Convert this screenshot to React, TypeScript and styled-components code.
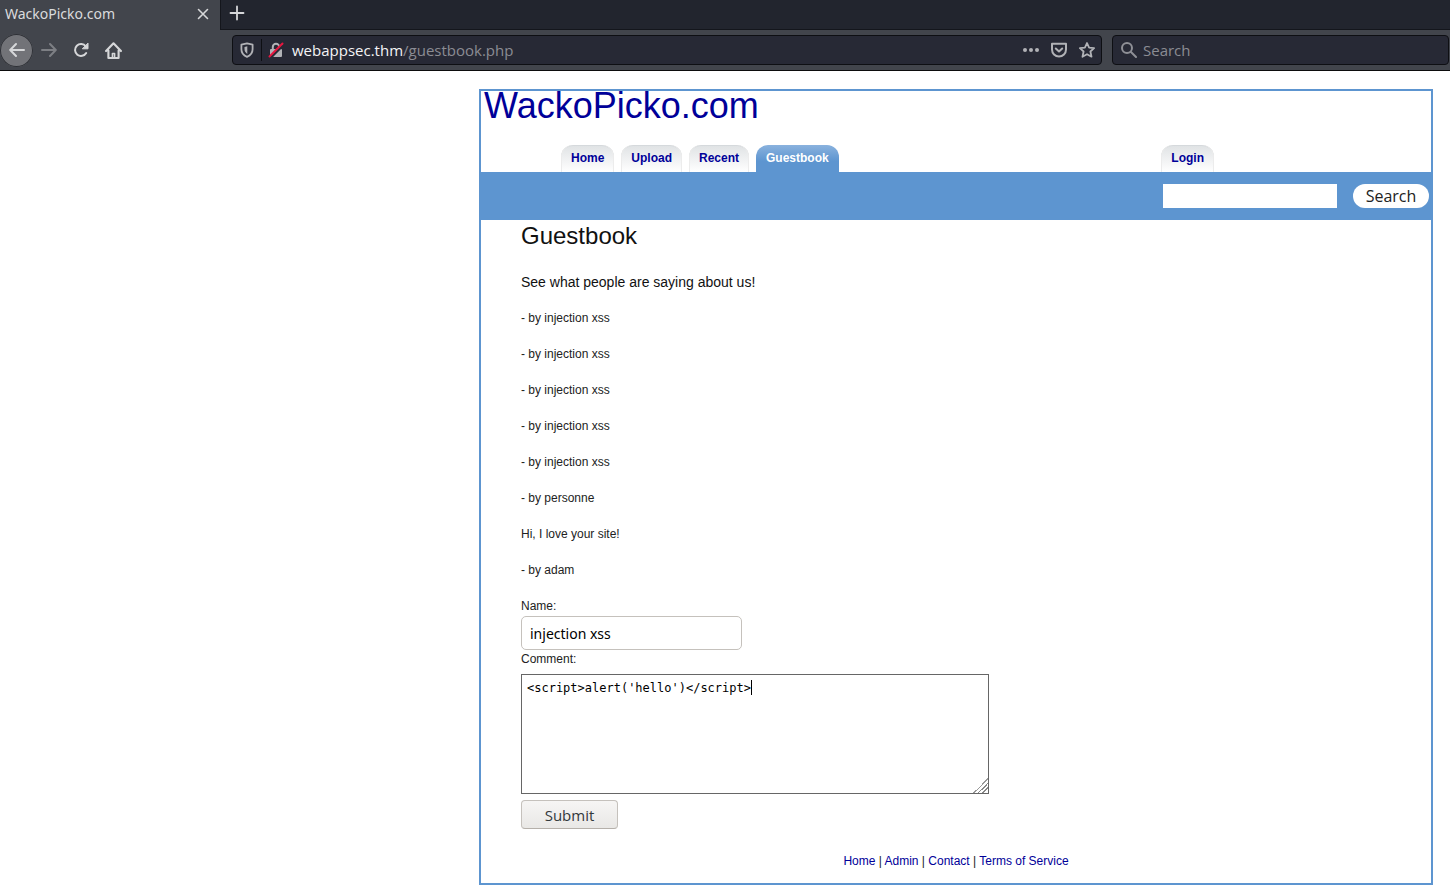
import React from "react";
import styled, { createGlobalStyle, css } from "styled-components";

const uiFont = `"Open Sans", "Noto Sans", sans-serif`;
const tabFont = `"Noto Sans", "Open Sans", sans-serif`;
const siteFont = `"Liberation Sans", Arial, sans-serif`;
const blue = "#5d95d0";
const navy = "#000099";

const GlobalStyle = createGlobalStyle`
  * { box-sizing: border-box; }
  body { margin: 0; background: #fff; color: #222; font: 12px/18px ${siteFont}; }
  h1, h2, p, ul { margin: 0; padding: 0; font-weight: normal; }
  button, input, textarea { margin: 0; }
  a { color: ${navy}; text-decoration: none; }
`;

const Chrome = styled.header`
  font-family: ${uiFont};
  background: #42454c;
  border-bottom: 1px solid #0c0c0d;
`;

const TabStrip = styled.div`
  display: flex;
  height: 30px;
  background: #22252e;
`;

const BrowserTab = styled.div`
  display: flex;
  align-items: center;
  justify-content: space-between;
  width: 220px;
  padding: 0 9px 2px 5px;
  background: #42454c;
  color: #dadbdd;
  font-family: ${tabFont};
  font-size: 14px;
`;

const StripRest = styled.div`
  flex: 1;
  padding: 4px 7px;
  border-left: 1px solid #14161c;
  border-bottom: 1px solid #14161c;
`;

const IconButton = styled.button<{ $size?: number; $round?: boolean; $muted?: boolean }>`
  display: flex;
  flex: none;
  align-items: center;
  justify-content: center;
  width: ${(p) => p.$size ?? 16}px;
  height: ${(p) => p.$size ?? 16}px;
  padding: 0;
  border: 0;
  background: none;
  color: ${(p) => (p.$muted ? "#b1b2b6" : "#d6d7d9")};
  ${(p) =>
    p.$round &&
    css`
      border-radius: 50%;
      background: #727378;
      box-shadow: inset 0 0 0 1px #2e3036;
    `}
  &:disabled { color: #7d7f84; }
`;

const Toolbar = styled.div`
  display: flex;
  align-items: center;
  height: 40px;
  padding-right: 1px;
`;

const NavButtons = styled.nav`
  display: flex;
  align-items: center;
  width: 232px;
`;

const Field = styled.div<{ $grow?: boolean }>`
  display: flex;
  align-items: center;
  height: 30px;
  border: 1px solid #0e0f13;
  border-radius: 4px;
  background: #272935;
  color: #8f9096;
  ${(p) => (p.$grow ? "flex: 1; margin-right: 10px; padding: 0 6px;" : "width: 337px; padding: 0 8px;")}
`;

const Separator = styled.span`
  width: 1px;
  height: 22px;
  margin: 0 6px;
  background: #0e0f13;
`;

const Address = styled.div`
  flex: 1;
  padding-left: 8px;
  font-size: 15px;
  color: #8b8c93;
`;

const Host = styled.span`
  color: #f4f4f6;
`;

const FieldActions = styled.div`
  display: flex;
  gap: 12px;
`;

const BrowserSearch = styled.input`
  flex: 1;
  min-width: 0;
  padding: 0 0 0 6px;
  border: 0;
  outline: 0;
  background: none;
  font: 15px ${uiFont};
  &::placeholder { color: #8b8c93; opacity: 1; }
`;

const Site = styled.div`
  max-width: 954px;
  margin: 18px 17px 10px auto;
  border: 2px solid ${blue};
`;

const Title = styled.h1`
  padding-left: 3px;
  font-size: 36px;
  line-height: 30px;
`;

const Menu = styled.nav`
  display: flex;
  justify-content: space-between;
  margin-top: 24px;
  padding: 0 217px 0 80px;
`;

const TabGroup = styled.div`
  display: flex;
  gap: 7px;
`;

const MenuTab = styled.a<{ $active?: boolean }>`
  height: 27px;
  padding: 4px 10px 0;
  border-radius: 12px 12px 0 0;
  font-weight: bold;
  ${(p) =>
    p.$active
      ? css`
          color: #fff;
          background: linear-gradient(#8ab2de, ${blue} 60%);
        `
      : css`
          background: linear-gradient(#dfe2e4, #fff);
          box-shadow: inset 1px 0 #ececec, inset -1px 0 #ececec, inset 0 1px #d5d9dc;
        `}
`;

const SearchBar = styled.form`
  display: flex;
  align-items: center;
  justify-content: flex-end;
  gap: 16px;
  height: 48px;
  padding-right: 2px;
  background: ${blue};
`;

const SearchInput = styled.input`
  width: 174px;
  height: 24px;
  padding: 0 4px;
  border: 0;
`;

const SearchButton = styled.button`
  width: 76px;
  height: 24px;
  padding: 0;
  border: 0;
  border-radius: 12px;
  background: #fff;
  color: #222;
  font: 16px/24px ${uiFont};
`;

const Content = styled.main`
  padding: 0 40px;
`;

const Heading = styled.h2`
  font-size: 24px;
  line-height: 32px;
  color: #111;
`;

const Lead = styled.p`
  margin: 21px 0 18px;
  font-size: 14px;
  line-height: 18px;
  color: #111;
`;

const Entry = styled.p`
  margin-bottom: 18px;
`;

const Label = styled.label`
  display: block;
`;

const NameInput = styled.input`
  display: block;
  width: 221px;
  height: 34px;
  margin-top: 1px;
  padding: 0 8px;
  border: 1px solid #c5c1bc;
  border-radius: 5px;
  background: #fff;
  color: #000;
  font: 14px ${tabFont};
`;

const CommentArea = styled.div`
  position: relative;
  width: fit-content;
  margin: 6px 0;
  font: 12px/16px "DejaVu Sans Mono", monospace;
`;

const CommentBox = styled.textarea`
  display: block;
  width: 468px;
  height: 120px;
  padding: 5px;
  border: 1px solid #666;
  outline: 0;
  background: #fff;
  color: #000;
  font: inherit;
  caret-color: transparent;
  &::-webkit-resizer {
    background:
      linear-gradient(135deg, transparent 50%, #999 50%, #999 56%, transparent 56%, transparent 64%, #888 64%, #888 70%, transparent 70%, transparent 78%, #888 78%, #888 84%, transparent 84%);
  }
`;

const Caret = styled.span`
  position: absolute;
  width: 1px;
  height: 15px;
  background: #000;
  pointer-events: none;
`;

const Submit = styled.button`
  display: block;
  width: 97px;
  height: 29px;
  padding: 0;
  border: 1px solid #c5c1bc;
  border-bottom-color: #b5b0aa;
  border-radius: 4px;
  background: linear-gradient(#f6f5f4, #e9e8e6);
  color: #33383b;
  font: 15px ${uiFont};
`;

const Footer = styled.footer`
  padding: 23px 0 13px;
  text-align: center;
`;

const entries = [
  "- by injection xss",
  "- by injection xss",
  "- by injection xss",
  "- by injection xss",
  "- by injection xss",
  "- by personne",
  "Hi, I love your site!",
  "- by adam",
];

const Icon = ({ children, size = 16, width = 2 }: { children: React.ReactNode; size?: number; width?: number }) => (
  <svg width={size} height={size} viewBox="0 0 16 16" fill="none" stroke="currentColor" strokeWidth={width} strokeLinecap="round" strokeLinejoin="round" aria-hidden="true">
    {children}
  </svg>
);

export default function App() {
  const [comment, setComment] = React.useState("<script>alert('hello')</script>");
  const lines = comment.split("\n");
  const caretAt = {
    left: `calc(6px + ${lines[lines.length - 1].length}ch)`,
    top: 6 + (lines.length - 1) * 16,
  };

  return (
    <>
      <GlobalStyle />
      <Chrome>
        <TabStrip>
          <BrowserTab>
            <span>WackoPicko.com</span>
            <IconButton aria-label="Close tab">
              <Icon width={1.6}><path d="M3.5 3.5l9 9M12.500 3.500l-9 9" /></Icon>
            </IconButton>
          </BrowserTab>
          <StripRest>
            <IconButton aria-label="New tab" $size={18}>
              <Icon width={1.8}><path d="M8 1.500v13M1.500 8h13" /></Icon>
            </IconButton>
          </StripRest>
        </TabStrip>
        <Toolbar>
          <NavButtons>
            <IconButton aria-label="Back" $size={33} $round>
              <Icon><path d="M15 8H1.500M7 2L1.200 8 7 14" /></Icon>
            </IconButton>
            <IconButton aria-label="Forward" $size={32} disabled>
              <Icon><path d="M1 8h13.500M9 2l5.800 6L9 14" /></Icon>
            </IconButton>
            <IconButton aria-label="Reload" $size={32}>
              <Icon><path d="M13.200 11A6 6 0 1 1 12.800 4.300" /><path d="M15 1.500v5.300H9.700z" fill="currentColor" strokeWidth="1" /></Icon>
            </IconButton>
            <IconButton aria-label="Home page" $size={32}>
              <Icon size={17}><path d="M1 8.500L8 1.200l7 7.300M3.200 8v7h9.600V8" /><path d="M7 15v-4.200h2V15" strokeWidth="1.500" /></Icon>
            </IconButton>
          </NavButtons>
          <Field $grow>
            <IconButton aria-label="Tracking protection" $muted>
              <Icon width={1.8}>
                <path d="M8 1.300l5.600 1.400v4.500C13.600 11 11 13.600 8 14.800 5 13.600 2.400 11 2.400 7.200V2.700z" />
                <path d="M8.300 4.300v7.600C6.300 10.500 5.500 9 5.500 7V5z" fill="currentColor" stroke="none" />
              </Icon>
            </IconButton>
            <Separator />
            <IconButton aria-label="Connection is not secure" $muted>
              <Icon>
                <path d="M4.800 7V5a3.200 3.200 0 0 1 6.400 0v2" />
                <rect x="2" y="7" width="12" height="8" rx="1" fill="currentColor" stroke="none" />
                <path d="M2 16L15.500 2.500" stroke="#272935" strokeWidth="3" />
                <path d="M1.500 14.500L14.500 1.500" stroke="#e5173f" />
              </Icon>
            </IconButton>
            <Address><Host>webappsec.thm</Host>/guestbook.php</Address>
            <FieldActions>
              <IconButton aria-label="Page actions" $muted>
                <Icon><g fill="currentColor" stroke="none"><circle cx="2" cy="8" r="2" /><circle cx="8" cy="8" r="2" /><circle cx="14" cy="8" r="2" /></g></Icon>
              </IconButton>
              <IconButton aria-label="Save to Pocket" $muted>
                <Icon><path d="M1 1.800h14v5.700a7 7 0 0 1-14 0zM4.800 6.500L8 9.500l3.200-3" /></Icon>
              </IconButton>
              <IconButton aria-label="Bookmark" $muted>
                <Icon width={1.8}><path d="M8 1l2.100 4.600 5 .6-3.700 3.300 1.100 5.200L8 12.200l-4.500 2.500 1.100-5.200L.9 6.200l5-.6z" /></Icon>
              </IconButton>
            </FieldActions>
          </Field>
          <Field>
            <Icon><circle cx="6" cy="6" r="5" /><path d="M10 10l5 5" /></Icon>
            <BrowserSearch aria-label="Search the web" placeholder="Search" />
          </Field>
        </Toolbar>
      </Chrome>

      <Site>
        <Title><a href="#home">WackoPicko.com</a></Title>
        <Menu>
          <TabGroup>
            <MenuTab href="#home">Home</MenuTab>
            <MenuTab href="#upload">Upload</MenuTab>
            <MenuTab href="#recent">Recent</MenuTab>
            <MenuTab href="#guestbook" $active>Guestbook</MenuTab>
          </TabGroup>
          <MenuTab href="#login">Login</MenuTab>
        </Menu>
        <SearchBar onSubmit={(e) => e.preventDefault()}>
          <SearchInput aria-label="Search pictures" />
          <SearchButton>Search</SearchButton>
        </SearchBar>
        <Content>
          <Heading>Guestbook</Heading>
          <Lead>See what people are saying about us!</Lead>
          {entries.map((text, i) => (
            <Entry key={i}>{text}</Entry>
          ))}
          <form onSubmit={(e) => e.preventDefault()}>
            <Label htmlFor="name">Name:</Label>
            <NameInput id="name" defaultValue="injection xss" />
            <Label htmlFor="comment">Comment:</Label>
            <CommentArea>
              <CommentBox id="comment" value={comment} onChange={(e) => setComment(e.target.value)} spellCheck={false} />
              <Caret style={caretAt} />
            </CommentArea>
            <Submit>Submit</Submit>
          </form>
        </Content>
        <Footer>
          <a href="#home">Home</a> | <a href="#admin">Admin</a> | <a href="#contact">Contact</a> | <a href="#tos">Terms of Service</a>
        </Footer>
      </Site>
    </>
  );
}
